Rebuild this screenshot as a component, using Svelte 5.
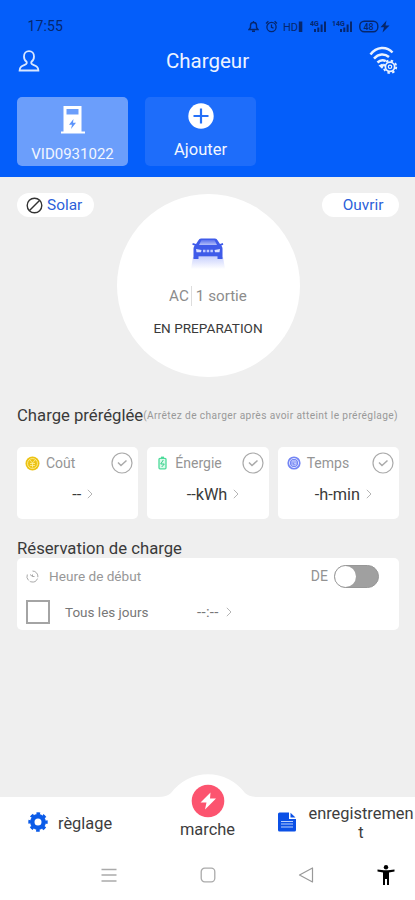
<script lang="ts">
	type Preset = { id: string; label: string; value: string };

	const presets: Preset[] = [
		{ id: 'cost', label: 'Coût', value: '--' },
		{ id: 'energy', label: 'Énergie', value: '--kWh' },
		{ id: 'time', label: 'Temps', value: '-h-min' }
	];

	let scheduled = $state(false);
	let daily = $state(false);
</script>

{#snippet chevron()}
	<svg class="chevron" viewBox="0 0 6 10" width="6" height="10">
		<path d="M.8.8 5 5 .8 9.2" fill="none" stroke="#b5b5b5" />
	</svg>
{/snippet}

{#snippet signal()}
	<svg width="17" height="13" viewBox="0 0 17 13">
		<text x="0" y="6" font-size="7" font-weight="700">4G</text>
		<path d="M4 9h2v3H4zM7.300 7.500h2V12h-2zM10.600 4.500h2V12h-2zM14 1.500h2V12h-2z" />
	</svg>
{/snippet}

<div class="app">
	<header>
		<div class="status">
			<span class="clock">17:55</span>
			<div class="status-icons">
				<svg width="11" height="13" viewBox="0 0 11 13">
					<path d="M1 9.500h9L8.500 7.500V5.500a3 3 0 0 0-6 0v2zM4 11.300h3M5.500 1v2" fill="none" stroke="#06276d" stroke-width="1.400" />
				</svg>
				<svg class="alarm" width="13" height="13" viewBox="0 0 13 13">
					<g fill="none" stroke="#06276d" stroke-width="1.300">
						<circle cx="6.500" cy="7" r="4.600" />
						<path d="M6.500 4.500V7.300l2 .8M1 3.500 3.400 1.300M12 3.500 9.600 1.300" />
					</g>
				</svg>
				<svg class="hd" width="20" height="13" viewBox="0 0 20 13">
					<text x="0" y="10.500" font-size="11">HD</text>
					<path d="M15.800 1.500h3.500v10.500h-3.500z" />
				</svg>
				{@render signal()}
				<span class="sim"><i>1</i>{@render signal()}</span>
				<svg width="31" height="13" viewBox="0 0 31 13">
					<rect x=".8" y="1.300" width="18" height="10.400" rx="4.500" fill="none" stroke="#06276d" stroke-width="1.400" />
					<text x="4.500" y="9.800" font-size="9" font-weight="500">48</text>
					<path d="m27.500.5-6 6.700h3.500L23.500 12.500 30.500 5.500h-4z" />
				</svg>
			</div>
		</div>
		<div class="titlebar">
			<svg width="22" height="23" viewBox="0 0 22 23">
				<path
					d="M11 1.200c-3 0-5 2.200-5 5.200 0 2.300 1 4.300 2.600 5.400.5 1.200-.2 2.200-1.600 2.900-3 1.300-5.200 1.800-5.400 5.800h18.800c-.2-4-2.400-4.500-5.400-5.800-1.400-.7-2.100-1.700-1.600-2.900C15 10.700 16 8.700 16 6.400c0-3-2-5.200-5-5.200z"
					fill="none"
					stroke="#d9e7ff"
					stroke-width="1.800"
				/>
			</svg>
			<h1>Chargeur</h1>
			<svg width="30" height="30" viewBox="0 0 30 30" fill="none" stroke="#e9f1ff">
				<path d="M2.500 8.500C8.500.5 18.500 0 24.500 6.500M6 12.600c4.500-5 10.500-5.400 15-1.600M9.500 16.500c2.700-2.700 5.300-3 8.300-1.300" stroke-width="2.500" />
				<path d="M10.500 19.500 14 17.800l2.500 1.500-2.500 3.500z" fill="#e9f1ff" stroke="none" />
				<circle cx="22" cy="20.800" r="6.800" fill="#075ff9" stroke="none" />
				<circle cx="22" cy="20.800" r="4.600" stroke-width="1.700" />
				<circle cx="22" cy="20.800" r="6.200" stroke-width="2" stroke-dasharray="2.400 2.470" />
				<circle cx="22" cy="20.800" r="1.700" stroke-width="1.200" />
			</svg>
		</div>
		<div class="devices">
			<button class="device selected">
				<svg width="26" height="30" viewBox="0 0 26 30">
					<path fill="#fff" fill-rule="evenodd" d="M3.500 1h18v25.500h3.500V28.500H1V26.500h2.500zM6.500 4v5.500h12V4z" />
					<path d="M13.500 14 9 19.800h3L11 24l5-6.200h-3z" fill="#5d95fb" />
				</svg>
				<span>VID0931022</span>
			</button>
			<button class="device add">
				<svg width="26" height="26" viewBox="0 0 26 26">
					<circle cx="13" cy="13" r="12.700" fill="#fff" />
					<path d="M13 5.500v15M5.500 13h15" stroke="#2570f8" stroke-width="2.200" />
				</svg>
				<span>Ajouter</span>
			</button>
		</div>
	</header>

	<main>
		<section class="charger">
			<button class="pill solar">
				<svg width="17" height="17" viewBox="0 0 17 17">
					<g fill="none" stroke="#333" stroke-width="1.400">
						<circle cx="8.500" cy="8.500" r="7.300" />
						<path d="m3.500 13.500 10-10" />
					</g>
				</svg>
				Solar
			</button>
			<div class="dial">
				<svg width="40" height="38" viewBox="0 0 40 38">
					<defs>
						<linearGradient id="shade" x1="0" y1="0" x2="0" y2="1">
							<stop offset="0" stop-color="#aebafc" />
							<stop offset="1" stop-color="#fff" />
						</linearGradient>
						<linearGradient id="roof" x1="0" y1="0" x2="0" y2="1">
							<stop offset="0" stop-color="#5a72ee" />
							<stop offset="1" stop-color="#b4bff9" />
						</linearGradient>
					</defs>
					<path d="M5 21h30l2 12H3z" fill="url(#shade)" opacity=".65" />
					<path d="M13 2.500h14q1.800 0 2.700 2L32 8l2.800-1 .5 1.800-2 .7q1.200 1.500 1.200 3V23h-5v-2.500h-19V23h-5V12.500q0-1.500 1.200-3l-2.400-.7.500-1.800L8 8l2.300-3.500q.9-2 2.700-2z" fill="#3f5be9" />
					<path d="M13.500 4h13l2.500 5H11z" fill="url(#roof)" />
					<path d="m8 13 5.500 1-.5 2.200H8.500zM32 13l-5.500 1 .5 2.200h4.500z" fill="#dce1ff" />
					<path d="M15 15h10" stroke="#c0caff" stroke-width="2.400" stroke-dasharray="2.500 1.200" />
				</svg>
				<p class="outlet"><span>AC</span><span>1 sortie</span></p>
				<p class="state">EN PREPARATION</p>
			</div>
			<button class="pill open">Ouvrir</button>
		</section>

		<div class="heading preset-heading">
			<h2>Charge préréglée</h2>
			<small>(Arrêtez de charger après avoir atteint le préréglage)</small>
		</div>
		<div class="presets">
			{#each presets as preset (preset.id)}
				<div class="preset {preset.id}">
					<div class="preset-top">
						{#if preset.id === 'cost'}
							<svg width="15" height="15" viewBox="0 0 15 15">
								<circle cx="7.500" cy="7.500" r="7" fill="#ecc314" />
								<g fill="none" stroke="#fff0a0" stroke-width=".8">
									<circle cx="7.500" cy="7.500" r="5" />
									<path d="m5 4 2.500 3L10 4M5 7.500h5M5 9.500h5M7.500 7v4.500" />
								</g>
							</svg>
						{:else if preset.id === 'energy'}
							<svg width="9" height="14" viewBox="0 0 9 14">
								<path d="M3 .6h3v1.700H3z" fill="#4ddb9a" />
								<rect x="1" y="2.300" width="7" height="10.500" rx="1" fill="#dcf9eb" stroke="#4ddb9a" stroke-width="1.300" />
								<path d="M5.300 4 2.700 8h3.600l-2.600 3" fill="none" stroke="#35cf8a" />
							</svg>
						{:else}
							<svg width="14" height="14" viewBox="0 0 14 14">
								<circle cx="7" cy="7" r="6.600" fill="#7385f4" />
								<g fill="none" stroke="#dce1ff">
									<circle cx="7" cy="7" r="4.600" />
									<path d="M5 4.800h4v4.400H5zM7 5v2.300h2" stroke-width=".8" />
								</g>
							</svg>
						{/if}
						<span class="preset-label">{preset.label}</span>
						<svg class="check" width="22" height="22" viewBox="0 0 22 22" fill="none" stroke="#aaa">
							<circle cx="11" cy="11" r="10" stroke-width="1.200" />
							<path d="m7 10.500 3 3 5.500-5" stroke-width="1.500" />
						</svg>
					</div>
					<div class="preset-value"><span>{preset.value}</span>{@render chevron()}</div>
				</div>
			{/each}
		</div>

		<div class="heading booking-heading">
			<h2>Réservation de charge</h2>
		</div>
		<div class="booking">
			<div class="row">
				<svg class="timer" width="13" height="13" viewBox="0 0 13 13" fill="none" stroke="#a8a8a8">
					<path d="M6.500 1a5.500 5.500 0 1 1-5.200 3.500" stroke-dasharray="9 1.500" />
					<path d="M4 4.500 6.500 6.500V4.500M6.500 6.500h2" />
				</svg>
				<span class="start">Heure de début</span>
				<span class="off">DE</span>
				<button
					class="switch"
					class:on={scheduled}
					aria-label="Heure de début"
					onclick={() => (scheduled = !scheduled)}
				></button>
			</div>
			<div class="row">
				<button
					class="box"
					class:on={daily}
					aria-label="Tous les jours"
					onclick={() => (daily = !daily)}
				></button>
				<span class="daily">Tous les jours</span>
				<span class="hour">--:--</span>
				{@render chevron()}
			</div>
		</div>
	</main>

	<nav class="tabs">
		<svg class="bump" width="100" height="30" viewBox="0 0 100 30">
			<path d="M0 23q9 0 13-4a46 46 0 0 1 74 0q4 4 13 4v7H0z" fill="#fff" />
		</svg>
		<a class="tab settings" href="#reglage">
			<svg width="20" height="20" viewBox="0 0 20 20" fill="none" stroke="#0b5be8">
				<circle cx="10" cy="10" r="5.700" stroke-width="4.400" />
				<circle cx="10" cy="10" r="8.400" stroke-width="2.600" stroke-dasharray="3.600 2.997" stroke-dashoffset="1.800" />
			</svg>
			<span>règlage</span>
		</a>
		<a class="tab start-tab" href="#marche">
			<svg width="34" height="34" viewBox="0 0 34 34">
				<circle cx="17" cy="17" r="16.300" fill="#fc546f" />
				<path d="M19.500 8.500 9.500 18.500h6L14 25.500 25 14.500h-6z" fill="#fff" />
			</svg>
			<span>marche</span>
		</a>
		<a class="tab records" href="#enregistrement">
			<svg width="18" height="20" viewBox="0 0 18 20">
				<path d="M1.500.5H11V7h7v11q0 1.500-1.500 1.500h-15Q0 19.500 0 18V2Q0 .5 1.500.5zM12.500.8 17.500 5.500h-5z" fill="#0b50e6" />
				<path d="M3 9.500h12M3 12h12M3 15h12" stroke="#b9cffc" stroke-width="1.200" />
			</svg>
			<span>enregistrement</span>
		</a>
	</nav>

	<footer>
		<svg width="16" height="16" viewBox="0 0 16 16">
			<path d="M.5 2.500h15M.5 8h15M.5 14h15" stroke="#aaa" stroke-width="1.400" />
		</svg>
		<svg width="16" height="16" viewBox="0 0 16 16">
			<rect x="1.200" y="1.200" width="13.600" height="13.600" rx="3.500" fill="none" stroke="#aaa" stroke-width="1.300" />
		</svg>
		<svg width="16" height="16" viewBox="0 0 16 16">
			<path d="M14.500 1v14L1.500 8z" fill="none" stroke="#999" stroke-width="1.200" stroke-linejoin="round" />
		</svg>
		<svg width="18" height="20" viewBox="0 0 18 20">
			<circle cx="9" cy="2.300" r="2.200" />
			<path d="M.5 4.500 7 5.300h4l6.500-.8v2L12 7.500V20h-2v-6H8v6H6V7.500L.5 6.500z" />
		</svg>
	</footer>
</div>

<style>
	:global(body) {
		margin: 0;
	}

	.app {
		width: 415px;
		height: 900px;
		overflow: hidden;
		display: flex;
		flex-direction: column;
		background: #efefef;
		font-family: Roboto, 'Liberation Sans', sans-serif;
		color: #3a3a3a;
	}

	.app svg {
		display: block;
		flex: none;
	}

	h1,
	h2,
	p {
		margin: 0;
		font-weight: 400;
	}

	button {
		border: 0;
		padding: 0;
		font: inherit;
		cursor: pointer;
	}

	header {
		box-sizing: border-box;
		height: 177px;
		padding: 16px 17px 0;
		background: #045efa;
	}

	.status {
		height: 20px;
		display: flex;
		align-items: center;
		justify-content: space-between;
		padding: 0 8px 0 10.5px;
		color: #06276d;
	}

	.clock {
		font-size: 14px;
		letter-spacing: 0.15px;
	}

	.status-icons {
		display: flex;
		align-items: center;
		fill: #06276d;
	}

	.alarm {
		margin: 0 5px 0 6px;
	}

	.hd {
		margin-right: 7px;
	}

	.sim {
		display: flex;
		margin: 0 6px 0 5px;
	}

	.sim i {
		font-size: 7px;
		line-height: 8px;
		font-style: normal;
		font-weight: 700;
	}

	.titlebar {
		height: 50px;
		display: flex;
		align-items: center;
		justify-content: space-between;
		padding: 0 0 0 1px;
	}

	h1 {
		font-size: 20.5px;
		color: #edf3ff;
		padding-left: 7px;
	}

	.devices {
		display: flex;
		gap: 17px;
		margin-top: 11px;
	}

	.device {
		width: 111px;
		height: 69px;
		border-radius: 5px;
		display: flex;
		flex-direction: column;
		align-items: center;
		color: #f2f6ff;
		background: #1e6dfa;
	}

	.selected {
		background: #6b9efb;
		padding-top: 8px;
		gap: 10px;
		font-size: 15px;
		line-height: 18px;
	}

	.add {
		padding-top: 6px;
		gap: 12px;
		font-size: 16.5px;
		line-height: 18px;
	}

	main {
		height: 620px;
		box-sizing: border-box;
		padding: 17px 16px 0 17px;
	}

	.charger {
		display: flex;
		justify-content: space-between;
		align-items: flex-start;
	}

	.pill {
		height: 24px;
		width: 77px;
		border-radius: 12px;
		background: #fff;
		color: #2c5fd9;
		font-size: 15.4px;
		display: flex;
		align-items: center;
	}

	.solar {
		padding-left: 9px;
		gap: 4px;
		margin-top: -1px;
	}

	.open {
		justify-content: center;
		padding-left: 5px;
		margin-top: -1px;
	}

	.dial {
		width: 183px;
		height: 183px;
		box-sizing: border-box;
		padding-top: 42px;
		border-radius: 50%;
		background: #fff;
		display: flex;
		flex-direction: column;
		align-items: center;
	}

	.outlet {
		margin-top: 12px;
		display: flex;
		color: #8c8c8c;
		font-size: 15.2px;
		line-height: 20px;
	}

	.outlet span + span {
		border-left: 1px solid #ddd;
		margin-left: 2px;
		padding-left: 4px;
	}

	.state {
		margin-top: 14px;
		font-size: 13.6px;
		line-height: 16px;
	}

	.heading {
		display: flex;
		align-items: center;
		white-space: nowrap;
	}

	h2 {
		font-size: 16.7px;
	}

	.preset-heading {
		height: 20px;
		margin-top: 28px;
	}

	small {
		font-size: 10.2px;
		letter-spacing: 0.36px;
		color: #999;
	}

	.presets {
		display: grid;
		grid-template-columns: repeat(3, 1fr);
		gap: 9px;
		margin-top: 22px;
	}

	.preset {
		height: 72px;
		border-radius: 5px;
		background: #fff;
	}

	.preset-top {
		display: flex;
		align-items: center;
		height: 22px;
		padding: 5px 5px 0 8px;
	}

	.energy .preset-top {
		padding-left: 11px;
	}

	.time .preset-top {
		padding-left: 9px;
	}

	.preset-label {
		margin-left: 6px;
		font-size: 14px;
		color: #959595;
	}

	.energy .preset-label {
		margin-left: 8px;
	}

	.check {
		margin-left: auto;
	}

	.preset-value {
		display: flex;
		justify-content: center;
		align-items: center;
		gap: 6px;
		padding-left: 10px;
		height: 20px;
		margin-top: 10px;
		font-size: 16.3px;
	}

	.booking-heading {
		height: 20px;
		margin-top: 19px;
	}

	.booking {
		height: 72px;
		border-radius: 5px;
		background: #fff;
	}

	.row {
		display: flex;
		align-items: center;
		height: 36px;
		padding: 0 20px 0 9px;
	}

	.start {
		margin-left: 10px;
		font-size: 13.6px;
		color: #979797;
	}

	.off {
		margin-left: auto;
		font-size: 14px;
		color: #929292;
	}

	.switch {
		box-sizing: border-box;
		width: 45px;
		height: 23px;
		margin-left: 6px;
		border: 1px solid #979797;
		border-radius: 12px;
		background: #a0a0a0;
	}

	.switch::before {
		content: '';
		display: block;
		width: 21px;
		height: 21px;
		border-radius: 50%;
		background: #fff;
	}

	.switch.on {
		background: #045efa;
	}

	.switch.on::before {
		margin-left: auto;
	}

	.box {
		box-sizing: border-box;
		width: 24px;
		height: 24px;
		border: 2px solid #a4a4a4;
		background: #fff;
	}

	.box.on {
		background: #045efa;
	}

	.daily {
		width: 132px;
		margin-left: 15px;
		font-size: 13.5px;
		color: #777;
	}

	.hour {
		width: 24px;
		margin-right: 5px;
		font-size: 15px;
		letter-spacing: 0.3px;
		color: #777;
	}

	.tabs {
		position: relative;
		display: grid;
		grid-template-columns: 138px 139px 138px;
		height: 53px;
		background: #fff;
	}

	.bump {
		position: absolute;
		top: -23px;
		left: 158px;
	}

	.tab {
		display: flex;
		align-items: center;
		color: #3d3d3d;
		font-size: 16.4px;
		text-decoration: none;
		position: relative;
	}

	.settings {
		gap: 10px;
		padding-left: 28px;
	}

	.settings svg,
	.records svg {
		margin-bottom: 3px;
	}

	.start-tab {
		flex-direction: column;
		gap: 2px;
		margin-top: -13px;
		line-height: 19px;
	}

	.records {
		gap: 11px;
		line-height: 19px;
		padding-bottom: 1px;
	}

	.records svg {
		margin-left: 1px;
	}

	.records span {
		width: 108px;
		text-align: center;
		word-break: break-all;
	}

	footer {
		height: 50px;
		display: grid;
		grid-template-columns: 59px 99px 99px 98px 61px;
		align-items: center;
		background: #fff;
	}

	footer svg {
		justify-self: center;
	}

	footer svg:first-child {
		grid-column: 2;
	}
</style>
